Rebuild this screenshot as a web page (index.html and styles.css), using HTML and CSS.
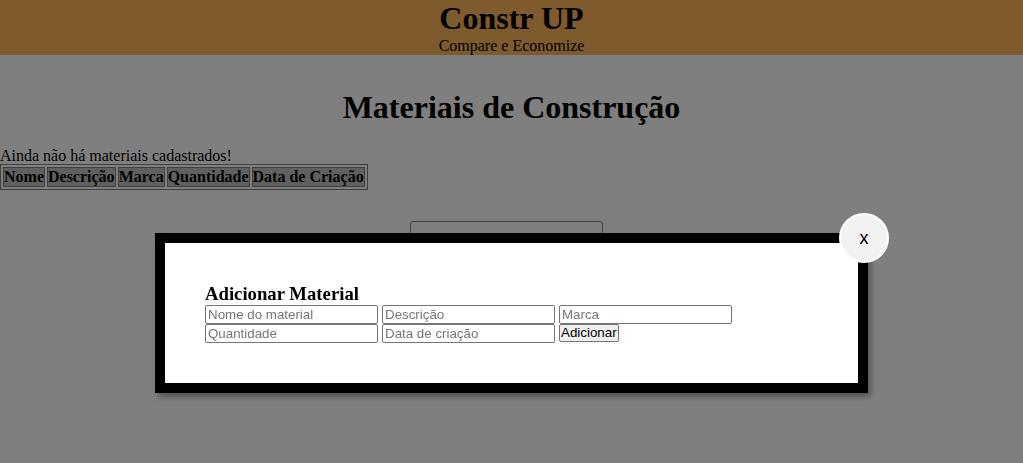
FILE: index.html
```html
<!DOCTYPE html>
<html lang="pt-BR">
<head>
<meta charset="utf-8">
<title>Constr UP</title>
<link rel="stylesheet" href="styles.css">
</head>
<body>
<header class="topbar">
  <h1 class="brand">Constr UP</h1>
  <p class="tagline">Compare e Economize</p>
</header>
<main class="content">
  <h1 class="page-title">Materiais de Construção</h1>
  <p class="empty">Ainda não há materiais cadastrados!</p>
  <table class="materials" border="1">
    <thead>
      <tr><th>Nome</th><th>Descrição</th><th>Marca</th><th>Quantidade</th><th>Data de Criação</th></tr>
    </thead>
  </table>
  <div class="actions">
    <button class="open-btn" type="button">Adicionar Material</button>
  </div>
</main>
<div class="overlay"></div>
<div class="modal">
  <button class="close-btn" type="button">x</button>
  <h3 class="modal-title">Adicionar Material</h3>
  <form class="form-grid">
    <input class="field" type="text" placeholder="Nome do material">
    <input class="field" type="text" placeholder="Descrição">
    <input class="field" type="text" placeholder="Marca">
    <input class="field" type="text" placeholder="Quantidade">
    <input class="field" type="text" placeholder="Data de criação">
    <button class="submit-btn" type="button">Adicionar</button>
  </form>
</div>
</body>
</html>
```
FILE: styles.css
```css
html, body {
  margin: 0;
  padding: 0;
}
body {
  background: #ffffff;
  font-family: "Liberation Serif", "Times New Roman", serif;
  font-size: 16px;
  color: #000;
  height: 463px;
  overflow: hidden;
}
.topbar {
  background: #feb45a;
  text-align: center;
  height: 55px;
}
.brand {
  margin: 0;
  font-size: 32px;
  line-height: 37px;
  font-weight: bold;
}
.tagline {
  margin: 0;
  font-size: 16px;
  line-height: 18px;
}
.content {
  padding-top: 34px;
}
.page-title {
  margin: 0 0 21px;
  text-align: center;
  font-size: 32px;
  line-height: 37px;
  font-weight: bold;
}
.empty {
  margin: 0;
  line-height: 17px;
}
.materials {
  border: 1px solid #808080;
  border-spacing: 2px;
}
.materials th {
  border: 1px solid #808080;
  background: #c0c0c0;
  padding: 0;
  font-weight: bold;
  line-height: 18px;
}
.actions {
  display: flex;
  justify-content: center;
  padding-right: 10px;
  margin-top: 31px;
}
.open-btn {
  width: 193px;
  height: 40px;
  border: 1px solid #808080;
  border-radius: 3px;
  background: #fefefe;
  font-family: "Liberation Sans", Arial, sans-serif;
  font-size: 16px;
}
.overlay {
  position: fixed;
  inset: 0;
  background: rgba(0, 0, 0, 0.5);
}
.modal {
  position: fixed;
  left: 155px;
  top: 233px;
  width: 613px;
  background: #fff;
  border: 10px solid #000;
  padding: 40px;
  box-shadow: 3px 4px 6px rgba(0, 0, 0, 0.35);
}
.close-btn {
  position: absolute;
  top: -30px;
  right: -31px;
  width: 50px;
  height: 50px;
  border-radius: 50%;
  border: 2px solid #fff;
  background: #f2f2f2;
  font-family: "Liberation Sans", Arial, sans-serif;
  font-size: 18px;
  color: #000;
  padding: 0;
  display: flex;
  align-items: center;
  justify-content: center;
}
.modal-title {
  margin: 0;
  font-size: 18.72px;
  line-height: 22px;
  font-weight: bold;
}
.form-grid {
  display: grid;
  grid-template-columns: repeat(3, 173px);
  column-gap: 4px;
  align-items: start;
}
.field {
  box-sizing: border-box;
  width: 173px;
  height: 19px;
  border: 1px solid #767676;
  border-radius: 2px;
  padding: 0 2px;
  font-family: "Liberation Sans", Arial, sans-serif;
  font-size: 13.33px;
  background: #fff;
}
.field::placeholder {
  color: #757575;
}
.submit-btn {
  justify-self: start;
  box-sizing: border-box;
  height: 18px;
  padding: 0 1px;
  border: 1px solid #767676;
  border-radius: 2px;
  background: #efefef;
  font-family: "Liberation Sans", Arial, sans-serif;
  font-size: 13.33px;
  color: #000;
  line-height: 14px;
}
```
